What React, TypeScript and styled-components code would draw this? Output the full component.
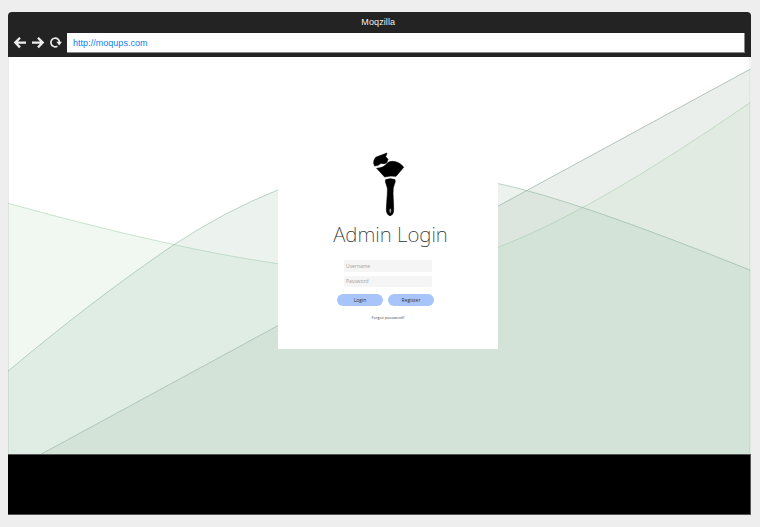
import React from "react";
import styled, { createGlobalStyle } from "styled-components";

const GlobalStyle = createGlobalStyle`
  * { box-sizing: border-box; }
  body { margin: 0; background: #eeeeee; font-family: "Liberation Sans", Arial, sans-serif; }
`;

const Page = styled.main`
  height: 527px;
  padding: 12px 9px 12px 8px;
  overflow: hidden;
`;

const Browser = styled.section`
  display: flex;
  flex-direction: column;
  width: 743px;
`;

const Chrome = styled.header`
  width: 742.5px;
  height: 45px;
  background: #232323;
  border-radius: 4px 4px 0 0;
`;

const WindowTitle = styled.div`
  height: 21px;
  padding-right: 2px;
  line-height: 20px;
  text-align: center;
  font-size: 9px;
  letter-spacing: 0.1px;
  color: #eeeeee;
`;

const Toolbar = styled.div`
  display: flex;
  height: 24px;
  padding: 0 6px 0 5px;
`;

const NavIcons = styled.svg`
  flex: none;
  width: 53.5px;
  height: 20px;
`;

const AddressBar = styled.div`
  flex: 1;
  height: 20px;
  padding-left: 6.5px;
  background: #fff;
  border: solid #858885;
  border-width: 0 1px 1px 0;
  line-height: 20px;
  font-size: 9px;
  letter-spacing: 0.03px;
  color: #0c80f0;
`;

const Viewport = styled.div`
  position: relative;
  display: flex;
  width: 742.5px;
  height: 397px;
  padding: 63px 0 0 270px;
  background: #fff;
`;

const Backdrop = styled.svg`
  position: absolute;
  top: 0;
  left: 0;
  width: 743px;
  height: 397px;
`;

const Card = styled.form`
  position: relative;
  display: flex;
  flex-direction: column;
  align-items: center;
  width: 220px;
  height: 229px;
  padding-top: 31px;
  background: #fff;
`;

const Logo = styled.svg`
  width: 37px;
  height: 67px;
  margin-left: 2px;
`;

const Heading = styled.h1`
  margin: 1px 0 1px 5px;
  height: 30px;
  line-height: 30px;
  font-family: "Noto Sans", "Open Sans", sans-serif;
  font-size: 20.5px;
  font-weight: 200;
  white-space: nowrap;
  color: #333;
`;

const Fields = styled.div`
  display: flex;
  flex-direction: column;
  gap: 4px;
  margin-top: 10px;
`;

const Field = styled.input`
  display: block;
  width: 88px;
  height: 11.5px;
  padding: 0 2px;
  border: 0;
  border-radius: 1px;
  background: #f5f5f5;
  font: 5px "Open Sans", sans-serif;
  &::placeholder { color: #a0a0a0; opacity: 1; }
`;

const Actions = styled.div`
  display: flex;
  gap: 5px;
  margin: 7px 5px 0 0;
`;

const ActionButton = styled.button`
  width: 46px;
  height: 12px;
  padding: 0;
  border: 0;
  border-radius: 6px;
  background: #a8c5fb;
  font: 5px/12px "Open Sans", sans-serif;
  color: #333;
`;

const ForgotLink = styled.a`
  margin-top: 8px;
  line-height: 8px;
  font-family: "Open Sans", sans-serif;
  font-size: 4px;
  color: #444;
`;

const Footer = styled.footer`
  height: 61px;
  background: #000;
  border: solid #555;
  border-width: 1px 1px 1px 0;
`;

function NavigationIcons() {
  return (
    <NavIcons viewBox="0 0 53.5 20" fill="none" stroke="#eee" strokeWidth="2.3">
      <path d="M7 4.8 2.3 9.6 7 14.4M2.5 9.6H13" />
      <path d="M25 4.8 29.7 9.6 25 14.4M29.5 9.6H19" />
      <path d="M44.4 13.2A4.3 4.3 0 1 1 46.5 9.5" strokeWidth="1.7" />
      <path d="M43.4 8.7H49L46.2 12.6Z" fill="#eee" stroke="none" />
    </NavIcons>
  );
}

const waves = [
  {
    line: "M40 454.8 750.5 69",
    floor: "V455Z",
    fill: "rgb(22,70,40)",
    opacity: 0.085,
    stroke: "#668878",
  },
  {
    line: "M8 203.3Q175 249.2 277.7 263.6C350 273 430 275 498 247.3Q592 212 750.5 102.3",
    floor: "V455H8Z",
    fill: "rgb(185,220,188)",
    opacity: 0.2,
    stroke: "#93c69c",
  },
  {
    line: "M8 371.2C62 326 116 284 173.5 245Q225 211 277.8 190C345 164 425 164 498 183.5Q576 200 750.5 270.3",
    floor: "V455H8Z",
    fill: "rgb(160,196,175)",
    opacity: 0.2,
    stroke: "#75a787",
  },
];

function Waves() {
  return (
    <Backdrop viewBox="8 57 743 397" fill="none">
      {waves.map((wave) => (
        <g key={wave.line}>
          <path d={wave.line + wave.floor} fill={wave.fill} fillOpacity={wave.opacity} />
          <path d={wave.line} stroke={wave.stroke} strokeOpacity=".55" strokeWidth=".85" />
        </g>
      ))}
      <path d="M8.5 57V455M750 57V455" stroke="#526b58" strokeOpacity=".13" />
    </Backdrop>
  );
}

function BrushLogo() {
  return (
    <Logo viewBox="63 17 111 201">
      <g stroke="#000" strokeWidth="2" strokeLinejoin="round">
        <path d="M111 23 107 34 114 42 110 52 102 55 93 54 84 60 74 62 71 54 72 45 77 36Z" />
        <path d="M112 53Q118 48 127 48Q149 49 161 66L138 93Q121 90 104 95L80 69Q102 68 112 53Z" />
        <path d="M107 103Q121 97 135 103Q137 109 133 117Q128 127 129 145L131 191Q131 210 120 211Q110 210 109 192L112 145Q114 127 109 118Q105 109 107 103Z" />
      </g>
      <ellipse cx="121" cy="196" rx="2.7" ry="6.5" fill="#999" />
    </Logo>
  );
}

export default function App() {
  return (
    <Page>
      <GlobalStyle />
      <Browser>
        <Chrome>
          <WindowTitle>Moqzilla</WindowTitle>
          <Toolbar>
            <NavigationIcons />
            <AddressBar>http://moqups.com</AddressBar>
          </Toolbar>
        </Chrome>
        <Viewport>
          <Waves />
          <Card>
            <BrushLogo />
            <Heading>Admin Login</Heading>
            <Fields>
              <Field placeholder="Username" />
              <Field type="password" placeholder="Password" />
            </Fields>
            <Actions>
              <ActionButton type="button">Login</ActionButton>
              <ActionButton type="button">Register</ActionButton>
            </Actions>
            <ForgotLink>Forgot password?</ForgotLink>
          </Card>
        </Viewport>
        <Footer />
      </Browser>
    </Page>
  );
}
